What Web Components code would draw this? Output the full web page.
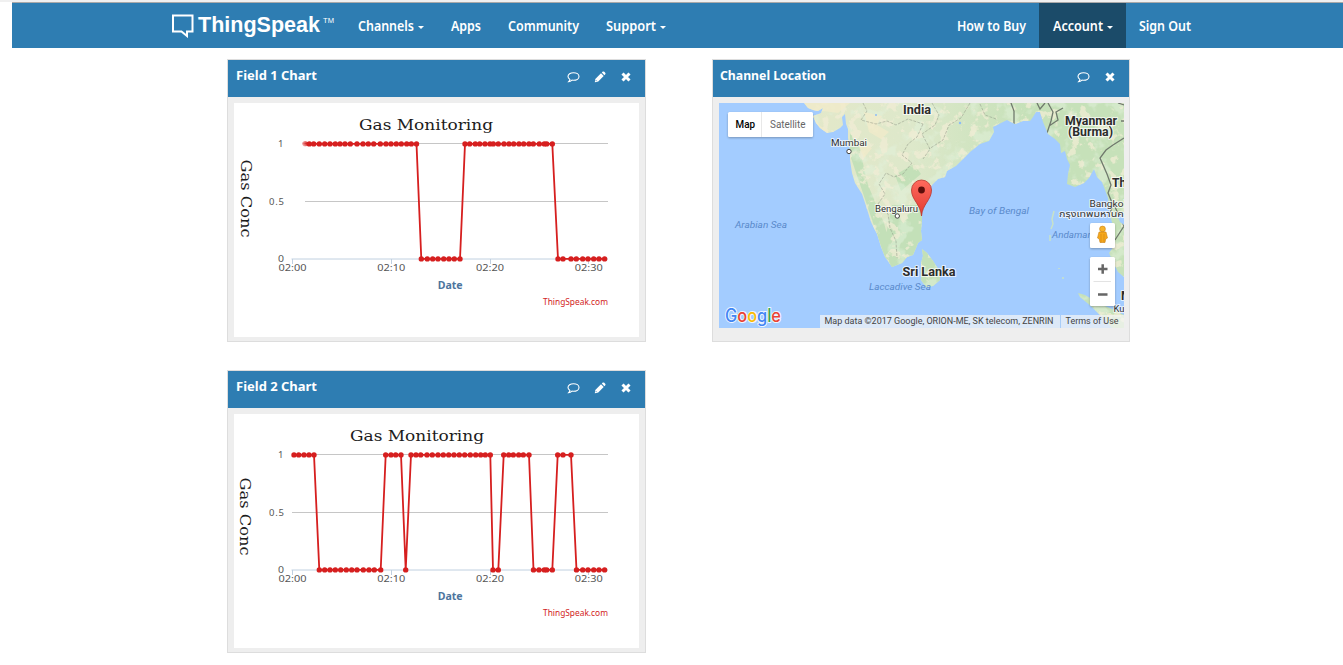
<!DOCTYPE html>
<html lang="en">
<head>
<meta charset="utf-8">
<title>ThingSpeak - Private View</title>
<style>
html,body{margin:0;background:#fff;font-family:"Noto Sans","Open Sans",sans-serif}
body{height:665px;overflow:hidden}
main{display:grid;grid-template-columns:419px 418px;column-gap:66px;row-gap:28px;padding:11px 0 0 227px;align-items:start}
</style>
</head>
<body>
<top-nav></top-nav>
<main>
  <dash-panel heading="Field 1 Chart" hw="81" editable><gas-chart kind="1"></gas-chart></dash-panel>
  <dash-panel heading="Channel Location" hw="106" class="loc"><location-map></location-map></dash-panel>
  <dash-panel heading="Field 2 Chart" hw="81" editable><gas-chart kind="2"></gas-chart></dash-panel>
</main>
<script>
/* Single line of text set to an exact measure */
class FitText extends HTMLElement{
  constructor(){
    super();
    const a=n=>this.getAttribute(n);
    const w=a('w'),s=a('size')||14,wt=a('weight')||600,f=a('font')||'Noto Sans';
    this.attachShadow({mode:'open'}).innerHTML=`<style>:host{display:block;flex:none;width:${w}px;height:20px}svg{display:block;overflow:visible}text{font:${wt} ${s}px "${f}",sans-serif;fill:currentColor}</style>
    <svg width="${w}" height="20"><text x="0" y="15" textLength="${w}" lengthAdjust="spacingAndGlyphs">${a('text')}</text></svg>`;
  }
}
customElements.define('fit-text',FitText);

class NavLink extends HTMLElement{
  constructor(){
    super();
    const caret=this.hasAttribute('caret')?'<i></i>':'';
    this.attachShadow({mode:'open'}).innerHTML=`<style>:host{display:flex;align-items:flex-start;box-sizing:border-box;height:45px;padding:13px 13px 0 14px;color:#fff}
    :host([active]){background:#1b4b69}
    i{margin:10px 0 0 4px;border:3px solid transparent;border-top-color:#fff;border-bottom:0;width:0;height:0}</style>
    <fit-text text="${this.getAttribute('text')}" w="${this.getAttribute('w')}" size="13.5"></fit-text>${caret}`;
  }
}
customElements.define('nav-link',NavLink);

class TopNav extends HTMLElement{
  constructor(){
    super();
    this.attachShadow({mode:'open'}).innerHTML=`<style>
    :host{display:block;height:48px;background:#f0f0f0}
    .edge{height:2px}
    .bar{display:flex;height:45px;margin-left:12px;border-top:1px solid #aaa9a9;background:#2e7db2;box-sizing:content-box;padding-left:160px;color:#fff}
    .wrap{display:flex;background:#fff}
    .wrap .bar{flex:1}
    .logo{width:22px;height:24px;margin:11px 4px 0 0;flex:none}
    .brand{margin-top:14px}.tm{margin:5px 10px 0 3px}
    .space{width:264px;flex:none}
    </style>
    <div class="edge"></div>
    <div class="wrap"><div class="bar">
      <svg class="logo" viewBox="0 0 22 24"><path d="M1 1.5H20.5V17.5H15V22L9.5 17.5H1Z" fill="none" stroke="#fff" stroke-width="2"/></svg>
      <fit-text class="brand" text="ThingSpeak" w="122" size="22.5" weight="700" font="Liberation Sans"></fit-text>
      <fit-text class="tm" text="TM" w="11" size="7.5" weight="400" font="Liberation Sans"></fit-text>
      <nav-link text="Channels" w="56" caret></nav-link>
      <nav-link text="Apps" w="30"></nav-link>
      <nav-link text="Community" w="71"></nav-link>
      <nav-link text="Support" w="50" caret></nav-link>
      <div class="space"></div>
      <nav-link text="How to Buy" w="69"></nav-link>
      <nav-link text="Account" w="50" caret active></nav-link>
      <nav-link text="Sign Out" w="52" style="padding-left:13px"></nav-link>
    </div></div>`;
  }
}
customElements.define('top-nav',TopNav);

class DashPanel extends HTMLElement{
  constructor(){
    super();
    const pen=this.hasAttribute('editable')?'<svg viewBox="0 0 12 12"><path d="M.8 11.2 1.3 8 7 2.3 9.7 5 4 10.7ZM7.8 1.5 8.8.6Q9.6.1 10.3.8L11.2 1.7Q11.9 2.5 11.3 3.2L10.4 4.2Z" fill="#fff"/><path d="M1.7 9.1 2.9 10.3" stroke="#2e7db2" stroke-width=".8"/></svg>':'';
    this.attachShadow({mode:'open'}).innerHTML=`<style>
    :host{display:block;box-sizing:border-box;height:283px;border:1px solid #ddd;background:#eee}
    header{display:flex;height:37px;background:#2e7db2;color:#fff;box-sizing:border-box;padding:5px 13px 0 8px}
    :host(.loc) header{padding-left:7px}
    .icons{margin-left:auto;display:flex;gap:14px;padding-top:6px}
    svg{width:12px;height:12px;display:block}
    svg:first-child{width:13px}
    .body{padding:6px}
    </style>
    <header><fit-text text="${this.getAttribute('heading')}" w="${this.getAttribute('hw')}" size="13" weight="700"></fit-text>
    <div class="icons"><svg viewBox="0 0 13 12"><path d="M6.5 1.7C9.6 1.7 12 3.3 12 5.5S9.6 9.3 6.5 9.3Q5.7 9.3 5 9.1 3.4 10.6 1.7 10.7 2.8 9.6 2.9 8.4 1 7.2 1 5.5C1 3.3 3.4 1.7 6.5 1.7Z" fill="none" stroke="#fff" stroke-width="1.1"/></svg>${pen}<svg viewBox="0 0 12 12"><path d="M2.5 2.5 9.5 9.5M9.5 2.5 2.5 9.5" stroke="#fff" stroke-width="3"/></svg></div></header>
    <div class="body"><slot></slot></div>`;
  }
}
customElements.define('dash-panel',DashPanel);

/* Runs alternate between value 1 and value 0 */
const RUNS={
 1:[[309.3,313.7,319.3,324.7,330,335.3,340,345,350.3,357,363,368.3,373.7,380.3,386,391,396.3,401.3,406.7,411.3,416.5],
    [421.3,427.3,432.7,438,443.7,449,454.3,460],
    [465,469.7,475.3,479.7,485,490,493.3,498.3,504,509,513.7,519,523.7,529,533.3,539.3,544.3,546.7,552.3],
    [558,563,571,576.3,582.7,588,593.7,599,604.6]],
 2:[[294,298.7,304,309,314],
    [319.3,324.7,330,335.3,340.7,346.3,351.7,357,363.3,369,374.3,380.7],
    [385.7,391,395.7,401],[405.7],
    [411,416,420.7,427,432.3,438,443.3,448.7,454,459.3,464.7,470.3,475.7,480.7,485.3,490.3],
    [493,498.3],[503.7,508.7,513.3,518.7,523.3,529],
    [533.5,539,544.3,546.7,552.3],[557.7,563,571],
    [576.5,582.7,588,593.7,599,604.6]]};
class GasChart extends HTMLElement{
  constructor(){
    super();
    const k=this.getAttribute('kind'),one=k==='1';
    const pts=RUNS[k].flatMap((r,i)=>r.map(x=>[x,i%2?258.9:143.9]));
    const gx=one?305:292,tx=one?359:350,ly=one?159.5:166.5,lx=one?240.5:239.5;
    const xl=[292.5,391.3,490,588.7].map((x,i)=>`<path d="M${Math.floor(x)+.5} 259V264" stroke="#c0d0e0"/><text class="t" x="${x-14}" y="271" textLength="28" lengthAdjust="spacingAndGlyphs">02:${i}0</text>`).join('');
    this.attachShadow({mode:'open'}).innerHTML=`<style>:host{display:block;background:#fff;width:405px;height:234px}svg{display:block}
    .t{font:9.5px "Noto Sans",sans-serif;fill:#555}.s{font:14.5px "DejaVu Serif",serif;fill:#1c1c1c}
    .d{font:700 11px "Noto Sans",sans-serif;fill:#4d759e}.c{font:8.3px "Noto Sans",sans-serif;fill:#d21c1c}</style>
    <svg width="405" height="234" viewBox="234 103 405 234">
    <defs><linearGradient id="f" gradientUnits="userSpaceOnUse" x1="300" x2="309" y1="0" y2="0"><stop stop-color="#d61f1f" stop-opacity="0"/><stop offset="1" stop-color="#d61f1f"/></linearGradient></defs>
    <path d="M${gx} 143.5H608M${gx} 201.5H608" stroke="#c6c6c6" fill="none"/>
    <path d="M291.5 259H608" stroke="#c0d0e0"/>
    ${xl}
    <text class="s" x="${tx}" y="130" textLength="134" lengthAdjust="spacingAndGlyphs">Gas Monitoring</text>
    <text class="s" transform="translate(${lx} ${ly}) rotate(90)" textLength="78" lengthAdjust="spacingAndGlyphs">Gas Conc</text>
    <text class="t" x="278" y="147">1</text><text class="t" x="269" y="205" textLength="15">0.5</text><text class="t" x="278" y="262" textLength="6" lengthAdjust="spacingAndGlyphs">0</text>
    ${one?'<path d="M302 143.5H309" stroke="url(#f)" stroke-width="2"/><circle cx="305" cy="143.7" r="2.6" fill="url(#f)"/>':''}
    <polyline points="${pts.map(p=>p.join()).join(' ')}" fill="none" stroke="#d61f1f" stroke-width="1.8" stroke-linejoin="round"/>
    ${pts.map(p=>`<circle cx="${p[0]}" cy="${p[1]}" r="2.7" fill="#d61f1f"/>`).join('')}
    <text class="d" x="437.7" y="289" textLength="25" lengthAdjust="spacingAndGlyphs">Date</text>
    <text class="c" x="543" y="305" textLength="65" lengthAdjust="spacingAndGlyphs">ThingSpeak.com</text>
    </svg>`;
  }
}
customElements.define('gas-chart',GasChart);

class LocationMap extends HTMLElement{
  constructor(){
    super();
    const t=(c,s,x,y,w)=>`<text class="${c}" x="${x}" y="${y}" ${w?`textLength="${w}" lengthAdjust="spacingAndGlyphs"`:''}>${s}</text>`;
    this.attachShadow({mode:'open'}).innerHTML=`<style>:host{display:block;width:405px;height:225px}svg{display:block}
    text{font-family:Roboto,sans-serif}
    .b{font-size:12px;font-weight:700;fill:#2c2c2c;stroke:#fff;stroke-opacity:.7;stroke-width:2.2px;paint-order:stroke;stroke-linejoin:round}
    .n{font-size:9.5px;fill:#333;stroke:#fff;stroke-opacity:.7;stroke-width:2px;paint-order:stroke;stroke-linejoin:round}
    .th{font-family:Roboto,"Noto Sans Thai",sans-serif}
    .w{font-size:9.5px;font-style:italic;fill:#5a8acb}
    .a{font-size:9px;fill:#444}.m{font-size:10px;fill:#666}.mm{font-size:10px;font-weight:500;fill:#000}
    .g{font:500 18px Inter,"Liberation Sans",sans-serif;stroke:#fff;stroke-opacity:.85;stroke-width:2px;paint-order:stroke;stroke-linejoin:round}</style>
    <svg width="405" height="225" viewBox="719 103 405 225">
    <defs>
      <clipPath id="land">
        <path d="M804 103 808 108 813 110 818 111 823 108 821 113 813 116 816 123 820 128 827 133 833 132 840 128 843 125 842 117 845 114 846 124 848 129 848 138 850 151 850 160 852 173 855 183 862 194 866 206 871 222 877 234 881 247 885 257 892 267 897 265 902 263 907 257 913 255 916 248 918 243 922 240 921 231 922 220 922 207 926 195 932 185 938 179 945 177 947 171 956 166 962 160 970 152 980 144 989 141 994 132 993 127 1001 123 1007 120 1015 124 1023 121 1030 121 1033 117 1036 112 1040 112 1043 122 1048 134 1055 139 1060 144 1061 153 1065 151 1067 159 1070 165 1068 174 1067 184 1075 187 1084 183 1089 178 1094 169 1097 177 1102 182 1105 190 1108 198 1110 215 1114 230 1115 245 1109 253 1113 262 1118 272 1124 277V225L1120 222 1117 215 1124 212V103Z"/>
        <path d="M922 249 927 253 933 261 940 272 940 280 933 286 926 287 921 280 921 263 923 256Z"/>
        <path d="M1078 293 1085 295 1098 303 1112 309 1124 315V328H1112L1102 317 1092 307 1080 297Z"/>
      </clipPath>
      <filter id="green" x="0" y="0" width="100%" height="100%"><feTurbulence type="fractalNoise" baseFrequency=".055" numOctaves="4" seed="8"/><feColorMatrix values="0 0 0 0 .76  0 0 0 0 .88  0 0 0 0 .71  7 0 0 0 -3.7"/></filter>
      <filter id="sand" x="0" y="0" width="100%" height="100%" color-interpolation-filters="sRGB"><feTurbulence type="fractalNoise" baseFrequency=".1" numOctaves="4" seed="21"/><feColorMatrix values="0 0 0 0 .94  0 0 0 0 .93  0 0 0 0 .83  0 10 0 0 -5.7"/></filter>
      <linearGradient id="soil" x1="0" x2="1"><stop stop-color="#e4e8c9"/><stop offset=".35" stop-color="#dde8ca"/><stop offset=".7" stop-color="#c6e1b9"/></linearGradient>
      <linearGradient id="pin" x2="0" y2="1"><stop stop-color="#ff6a5d"/><stop offset="1" stop-color="#e13a32"/></linearGradient>
      <filter id="sh" x="-20%" y="-20%" width="140%" height="150%"><feDropShadow dx="0" dy="1" stdDeviation="1" flood-opacity=".28"/></filter>
    </defs>
    <rect x="719" y="103" width="405" height="225" fill="#a3ccff"/>
    <g clip-path="url(#land)">
      <rect x="800" y="103" width="324" height="225" fill="url(#soil)"/>
      <path d="M850 133 859 146 868 185 884 223 895 263 885 258 850 155ZM892 205 922 205 924 266 890 268 886 235ZM915 250H942V290H915ZM895 175 914 164 921 174 901 191Z" fill="#c3e0b8"/>
      <rect x="800" y="103" width="324" height="225" filter="url(#green)" opacity=".5"/>
      <rect x="800" y="103" width="324" height="225" filter="url(#sand)" opacity=".75"/>
      <path d="M804 103H850L838 113 823 111 813 116 820 126 830 131 812 130ZM864 112 882 116 877 125 889 132 881 139 869 132ZM858 143 872 148 864 158Z" fill="#f1ebca" opacity=".75"/>
      <path d="M863 103 867 111 861 120 876 124 887 121 896 125 908 119 923 124M923 124 917 137 908 144 902 155 912 163 903 174 894 177 886 173 879 184 885 194 878 204M932 103 939 115 935 125 922 134 930 149 923 159M970 103 961 118 949 125 943 140 929 149M980 104 985 115 996 119M878 204 888 214 890 228 896 241 897 258" fill="none" stroke="#888f80" stroke-width=".8" stroke-dasharray="3 1.2" opacity=".6"/>
      <path d="M1011 103 1014 111 1014 124M1037 103 1040 109 1045 103M1048 103 1053 112 1051 121 1047 133M1049 126 1058 120 1056 112 1063 108M1124 138 1113 145 1106 150 1100 158 1107 174 1111 185 1108 193 1113 205 1110 213M1118 103 1124 105M1121 121 1124 121M1114 205 1124 226 1115 240" fill="none" stroke="#707a6d" stroke-width="1.3"/>
    </g>
    <path d="M1054 211 1052 219 1053 224 1051 229M1050 235V241M1059 268V269M1063 277V279" fill="none" stroke="#c8e2c9" stroke-width="1.5"/>
    <circle cx="960" cy="123" r="1.2" fill="#8dbcf7"/><circle cx="876" cy="115" r="1" fill="#8dbcf7"/>
    ${t('b','India',903,114,28)}${t('b','Myanmar',1065,124.5,52)}${t('b','(Burma)',1068,136,45)}${t('b','Th',1112,187)}${t('b','Sri Lanka',902.5,276,53)}${t('b','M',1121,300)}
    ${t('n','Mumbai',831,146,36)}${t('n','Bengaluru',875,212,43)}${t('n','Bangkok',1089.5,207,39)}${t('n th','กรุงเทพมหานคร',1059,217,70)}${t('n','Ku',1113.5,312,11)}
    <circle cx="849" cy="151.5" r="2.2" fill="#fff" stroke="#444"/><circle cx="897.3" cy="216" r="2.2" fill="#fff" stroke="#444"/>
    ${t('w','Arabian Sea',735,228,52)}${t('w','Bay of Bengal',969,214,60)}${t('w','Laccadive Sea',869,290,62)}${t('w','Andaman Sea',1052,238,59)}
    <path d="M921.5 216C920.5 204 911.5 200 911.5 190A10 10 0 0 1 931.5 190C931.5 200 922.5 204 921.5 216Z" fill="url(#pin)" stroke="#b9332c" stroke-width=".8"/><circle cx="921.5" cy="190" r="3.4" fill="#5c0e0b"/>
    <g filter="url(#sh)"><rect x="728" y="112" width="85" height="25" rx="1.5" fill="#fff"/></g><path d="M761.5 112V137" stroke="#e8e8e8"/>
    ${t('mm','Map',735.5,128,19.5)}${t('m','Satellite',770,128,35.5)}
    <g filter="url(#sh)"><rect x="1090" y="223" width="25" height="25" rx="1.5" fill="#fff"/><rect x="1090" y="257" width="25" height="49" rx="1.5" fill="#fff"/></g>
    <circle cx="1102.5" cy="229" r="2.9" fill="#f7b32b" stroke="#c98218" stroke-width=".6"/>
    <path d="M1099 232H1106L1107.5 238 1105.7 239 1105 242.5H1100L1099.3 239 1097.5 238Z" fill="#f5a81c" stroke="#c98218" stroke-width=".6"/><path d="M1101 234V242.3M1104 234V242.3" stroke="#d98a14" stroke-width=".7"/>
    <path d="M1098 269H1107.5M1102.7 264.3V273.7M1098 294.5H1107.5" stroke="#666" stroke-width="2.5"/><path d="M1093.5 281.5H1111" stroke="#e3e3e3"/>
    <text class="g" x="725" y="322" textLength="56" lengthAdjust="spacingAndGlyphs"><tspan fill="#4285f4">G</tspan><tspan fill="#ea4335">o</tspan><tspan fill="#fbbc05">o</tspan><tspan fill="#4285f4">g</tspan><tspan fill="#34a853">l</tspan><tspan fill="#ea4335">e</tspan></text>
    <rect x="820" y="315" width="304" height="13" fill="#f5f5f5" opacity=".7"/><path d="M1060.5 315V328" stroke="#a9cdf7"/>
    ${t('a','Map data ©2017 Google, ORION-ME, SK telecom, ZENRIN',824.5,324,229)}${t('a','Terms of Use',1065.5,324,53)}
    </svg>`;
  }
}
customElements.define('location-map',LocationMap);
</script>
</body>
</html>
